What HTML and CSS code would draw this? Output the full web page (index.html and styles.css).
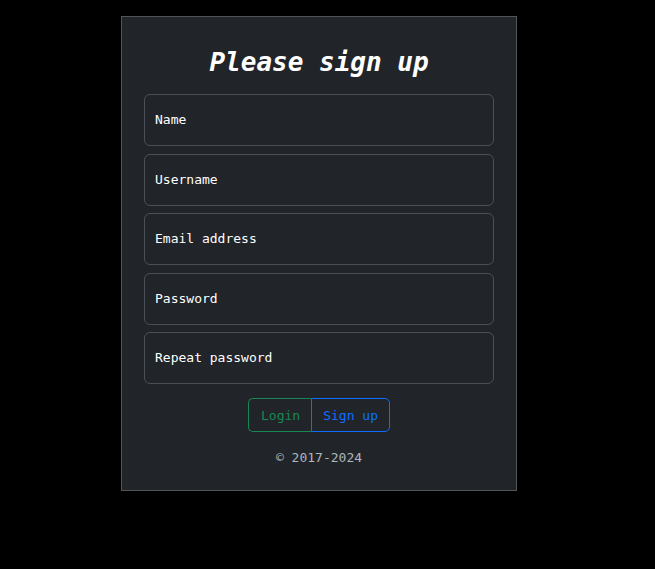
FILE: index.html
```html
<!DOCTYPE html>
<html lang="en">
<head>
<meta charset="utf-8">
<title>Sign up</title>
<link rel="stylesheet" href="styles.css">
</head>
<body>
<main class="card">
  <h1 class="title">Please sign up</h1>
  <form class="fields">
    <div class="field"><span class="label">Name</span></div>
    <div class="field"><span class="label">Username</span></div>
    <div class="field"><span class="label">Email address</span></div>
    <div class="field"><span class="label">Password</span></div>
    <div class="field"><span class="label">Repeat password</span></div>
  </form>
  <div class="btn-group">
    <a class="btn btn-login">Login</a>
    <a class="btn btn-signup">Sign up</a>
  </div>
  <p class="copy">© 2017-2024</p>
</main>
</body>
</html>
```
FILE: styles.css
```css
html, body {
  margin: 0;
  background: #000;
  font-family: "DejaVu Sans Mono", "Liberation Mono", monospace;
}
.card {
  box-sizing: border-box;
  width: 396px;
  height: 475px;
  margin: 16px 0 0 121px;
  padding: 22px 22px 0;
  background: #212529;
  border: 1px solid #50555a;
  display: flex;
  flex-direction: column;
  align-items: center;
}
.title {
  margin: 8px 0 16px;
  font-size: 26px;
  line-height: 31px;
  font-weight: bold;
  font-style: italic;
  color: #fff;
}
.fields {
  width: 100%;
  display: flex;
  flex-direction: column;
  gap: 7.5px;
}
.field {
  box-sizing: border-box;
  height: 52px;
  border: 1px solid #495057;
  border-radius: 6px;
  padding: 0 10px 1px;
  display: flex;
  align-items: center;
}
.label {
  font-size: 13px;
  color: #fff;
}
.btn-group {
  display: flex;
  margin-top: 14px;
}
.btn {
  box-sizing: border-box;
  height: 34px;
  display: flex;
  align-items: center;
  font-size: 13px;
  border: 1px solid;
}
.btn-login {
  color: #198754;
  border-color: #198754;
  border-radius: 5px 0 0 5px;
  padding: 0 11px 0 12px;
  border-right: none;
}
.btn-signup {
  color: #0d6efd;
  border-color: #0d6efd;
  border-radius: 0 5px 5px 0;
  padding: 0 11px;
}
.copy {
  margin: 17px 0 0;
  font-size: 13px;
  line-height: 18px;
  color: #adb5bd;
}
```
